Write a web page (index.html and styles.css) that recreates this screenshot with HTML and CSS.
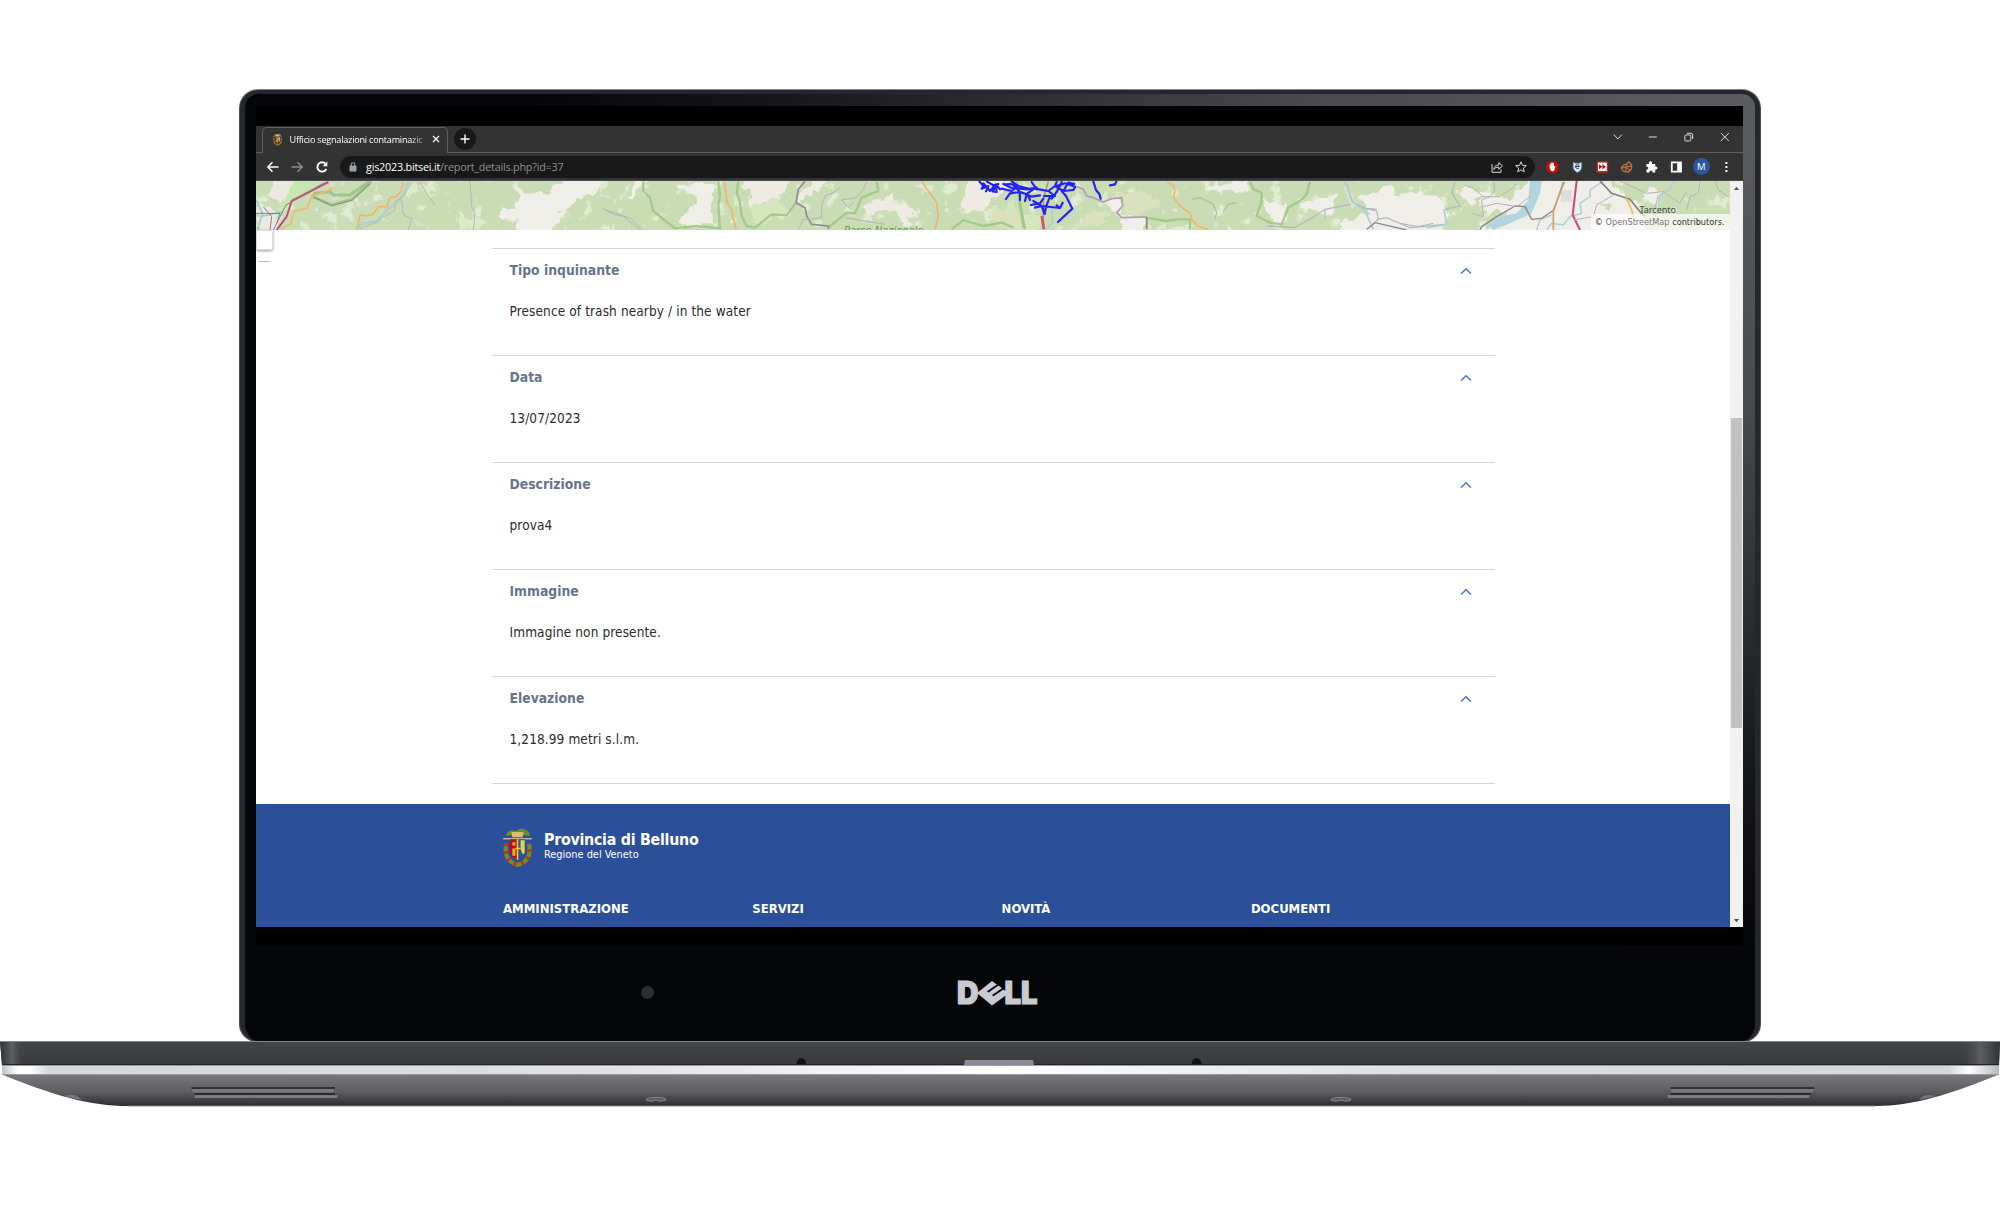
FILE: index.html
```html
<!DOCTYPE html>
<html lang="it">
<head>
<meta charset="utf-8">
<title>Ufficio segnalazioni contaminazione</title>
<link rel="stylesheet" href="styles.css">
</head>
<body>
<svg width="0" height="0" class="defs">
  <symbol id="crest" viewBox="0 0 28 38">
    <path d="M3 8Q4 0 13 3Q15 0 20 1Q26 3 26 8L21 7L14 8L7 7Z" fill="#6b8f2c"/>
    <path d="M8 4L20 4L19 9L9 9Z" fill="#d8bd6a"/>
    <path d="M3 15Q0 32 14 36Q29 32 25 15" fill="none" stroke="#728c26" stroke-width="4"/>
    <path d="M3 15Q0 32 14 36Q29 32 25 15" fill="none" stroke="#d3251f" stroke-width="4" stroke-dasharray="2.5 5"/>
    <path d="M0 10.500H28" stroke="#cfc39a" stroke-width="1.300"/>
    <path d="M6.500 11H14V31Q6.500 28 6.500 22Z" fill="#c00d18"/>
    <path d="M14 11H21.500V22Q21.500 28 14 31Z" fill="#2f5599"/>
    <path d="M9 14H12V17H9ZM9 20H12V27H9Z" fill="#d9b52b"/>
    <path d="M14 11V31M12 20H17" stroke="#f3d42c" stroke-width="1.500"/>
    <path d="M17 12H21V24Q19 28 17 20Z" fill="#d8d85c"/>
  </symbol>
</svg>
<main class="laptop">
  <div class="lid">
    <div class="glass">
      <div class="screen">
        <div class="browser">
          <div class="tabstrip">
            <div class="tab">
              <svg class="favicon"><use href="#crest"/></svg>
              <span class="tab-title">Ufficio segnalazioni contaminazic</span>
              <svg class="tab-close" viewBox="0 0 8 8"><path d="M1 1L7 7M7 1L1 7" stroke="#f1f1f1" stroke-width="1.400"/></svg>
            </div>
            <div class="new-tab"><svg width="10" height="10" viewBox="0 0 10 10"><path d="M5 .5V9.500M.5 5H9.500" stroke="#fff" stroke-width="1.400"/></svg></div>
            <div class="window-controls">
              <svg viewBox="0 0 12 12"><path d="M2 3.500L6 8L10 3.500"/></svg>
              <svg viewBox="0 0 12 12"><path d="M2 6H10"/></svg>
              <svg viewBox="0 0 12 12"><rect x="2" y="4" width="6" height="6" rx="1.300"/><path d="M4 2.300H8Q9.800 2.300 9.800 4V8"/></svg>
              <svg viewBox="0 0 12 12"><path d="M2 2L10 10M10 2L2 10"/></svg>
            </div>
          </div>
          <div class="toolbar">
            <div class="nav">
              <svg viewBox="0 0 14 14"><path d="M12.500 7H2M6.500 2.200L1.800 7L6.500 11.800" stroke="#fff"/></svg>
              <svg viewBox="0 0 14 14"><path d="M1.500 7H12M7.500 2.200L12.200 7L7.500 11.800" stroke="#8c8c8c"/></svg>
              <svg viewBox="0 0 14 14"><path d="M11.300 9A4.700 4.700 0 1 1 10.600 3.800" stroke="#fff" stroke-width="1.900"/><path d="M12.400 1.500V6.200H7.700Z" fill="#fff" stroke="none"/></svg>
            </div>
            <div class="omnibox">
              <svg class="lock" viewBox="0 0 8 10"><rect x=".5" y="3.500" width="7" height="6" rx=".8" fill="#9aa0a6"/><path d="M2.200 4V2.600A1.800 1.800 0 0 1 5.800 2.600V4" fill="none" stroke="#9aa0a6" stroke-width="1.100"/></svg>
              <span class="url"><b>gis2023.bitsei.it</b>/report_details.php?id=37</span>
              <svg class="pill-icon" viewBox="0 0 14 14"><path d="M2 4V12.300H11V9.500M3.700 9.500Q4.200 5 8.800 5V2.500L12.500 6L8.800 9.300V7Q5.500 7 3.700 9.500Z"/></svg>
              <svg class="pill-icon" viewBox="0 0 14 14"><path d="M7 1.800L8.500 5.300L12.300 5.600L9.400 8.100L10.300 11.800L7 9.800L3.700 11.800L4.600 8.100L1.700 5.600L5.500 5.300Z"/></svg>
            </div>
            <div class="extensions">
              <svg viewBox="0 0 14 14"><circle cx="7" cy="7" r="6.300" fill="#c90e0e"/><path d="M4.300 7.500V4.500H5.200V3.300H6.300V2.500H7.400V3.300H8.600V6L10 6.500L9 10.300Q7.500 12 5.500 10.800Z" fill="#fff"/></svg>
              <svg viewBox="0 0 14 14"><circle cx="7" cy="7" r="6" fill="#31475b"/><path d="M3 2L5 3.500H9L11 2V7Q11 10 7 12.500Q3 10 3 7Z" fill="#e8edf2"/><path d="M5 6.500H9Q9 4.700 7 4.700Q5 4.700 5 6.800Q5 9 8.700 8.300" fill="none" stroke="#31475b"/></svg>
              <svg viewBox="0 0 14 14"><rect x="1.200" y="1.200" width="11.600" height="11.600" rx="1.500" fill="#b92b24"/><rect x="2.600" y="2.600" width="8.800" height="8.300" fill="#fff"/><path d="M3.500 4L7 6.800L3.500 9.600ZM7 4L10.500 6.800L7 9.600Z" fill="#a81d1b"/></svg>
              <svg viewBox="0 0 14 14"><path d="M9 1.800A5.300 5.300 0 1 1 1.800 7.500L5 4.500L7.500 4.200ZM2 8L12 6M6 12L7.500 4M10.500 10L5 7" fill="none" stroke="#b9713d" stroke-width="1.300"/></svg>
              <svg viewBox="0 0 14 14"><path d="M2 4H4.500Q4.300 1.300 6.200 1.300Q8 1.300 7.800 4H10.800V6.500Q13 6.300 13 8Q13 9.800 10.800 9.600V12.500H8.200Q8.200 10.400 6.600 10.400Q5 10.400 5 12.500H2V9.600Q4 9.500 4 8Q4 6.800 2 6.700Z" fill="#fff"/></svg>
              <svg viewBox="0 0 14 14"><path d="M1.500 1.500H12.500V12.500H1.500ZM3.300 3.300V10.700H7.800V3.300Z" fill="#fff" fill-rule="evenodd"/></svg>
              <span class="avatar">M</span>
              <svg viewBox="0 0 14 14"><path d="M6 2H8V4H6ZM6 6H8V8H6ZM6 10H8V12H6Z" fill="#fff"/></svg>
            </div>
          </div>
          <div class="viewport">
            <div class="page">
              <div class="map">
                <svg class="map-canvas" viewBox="0 0 1474 49" fill="none" stroke-linejoin="round">
                  <defs>
                    <filter id="rough" x="-10%" y="-20%" width="120%" height="140%"><feTurbulence type="fractalNoise" baseFrequency=".09" numOctaves="3" seed="4"/><feDisplacementMap in="SourceGraphic" scale="13" xChannelSelector="R" yChannelSelector="G"/></filter>
                    <filter id="clearings" x="0" y="0" width="100%" height="100%"><feTurbulence type="fractalNoise" baseFrequency=".07" numOctaves="4" seed="9"/><feColorMatrix values="0 0 0 0 .87  0 0 0 0 .92  0 0 0 0 .8  9 0 0 0 -5.5"/></filter>
                  </defs>
                  <rect width="1474" height="49" fill="#c9dcb3"/>
                  <rect width="1474" height="49" filter="url(#clearings)" opacity=".6"/>
                  <g class="land" filter="url(#rough)">
                    <g transform="translate(-26,-101) scale(.33333)">
                      <path d="M145 295H210L190 335L155 370L130 350L112 345ZM78 385L120 375L150 398L140 465H78Z" fill="#ece9e2"/>
                      <path d="M205 295H290L185 365L165 400L130 420L150 370Z" fill="#c9e8b0"/>
                      <path d="M1000 295H1130L1085 345L1040 350L1020 385L985 405L968 465H870L865 420L850 430L805 400L812 380L855 385L870 350L850 325L900 340L920 350L960 330ZM1225 295H1255L1205 358L1185 357ZM1345 310L1380 325L1425 303L1455 335L1445 375L1450 425L1410 440H1365L1350 425L1390 380L1395 350L1340 325Z" fill="#f0eee9"/>
                      <path d="M530 303L570 325L545 345L515 340ZM690 400L770 430L735 450L690 440ZM575 320L620 345L600 355Z" fill="#dcebc5"/>
                    </g>
                    <g transform="translate(264,-5) scale(.33333)">
                      <path d="M680 8H815L780 60L745 80L720 65L710 95L680 90L690 50L660 25ZM845 50L890 8H920L880 50L830 82ZM1040 88L1110 55L1125 85L1180 95L1195 120L1160 115L1180 150H1150L1130 115L1095 105L1040 110L1025 95ZM1350 8H1480L1440 60L1395 95L1345 115L1320 100Z" fill="#efebe3"/>
                      <path d="M680 95L760 60L800 100L700 150ZM1450 90L1480 70L1500 110L1560 130V160H1440Z" fill="#d5e5bd"/>
                    </g>
                    <g transform="translate(684,-5) scale(.33333)">
                      <path d="M800 30L925 8V48L810 40ZM965 70L1045 90L1030 140L1000 145L980 100ZM1080 80L1190 55L1170 120L1085 100ZM1195 175L1210 130L1300 115L1250 60L1310 55L1345 20L1370 60L1430 55L1510 85L1525 125L1500 175ZM500 70L550 75L540 120L615 125V175H560L535 120Z" fill="#f0eee8"/>
                      <path d="M510 55L640 45L655 95L560 125L535 70ZM430 110L510 105L480 150L400 160ZM170 90L245 120L240 160L160 150Z" fill="#d8e0bc"/>
                    </g>
                    <g transform="translate(1144,-101) scale(.33333)">
                      <path d="M0 345L60 332L115 350L140 380L135 435L90 465H0ZM190 320L250 340L300 345L330 360L390 295H620L720 380L735 465H235L270 380L240 380L245 350L215 370L180 350ZM745 320L795 340L770 375L730 350Z" fill="#f0eee8"/>
                      <path d="M290 400L325 395L300 425L260 440L245 415ZM595 370L640 375L620 395Z" fill="#c9dcb3"/>
                    </g>
                  </g>
                  <g transform="translate(-26,-101) scale(.33333)">
                    <path d="M420 303L360 345L310 345L300 335L255 340L248 350L305 375L365 358L420 310" stroke="#9fc58a" stroke-width="9"/>
                    <path d="M248 350L305 377L368 360L425 305" stroke="#84917b" stroke-width="3"/>
                    <path d="M78 360L98 400L82 450M90 410L160 395" stroke="#9ccbd2" stroke-width="5"/>
                    <path d="M295 306L185 363L170 410L140 450" stroke="#c94a7d" stroke-width="6"/>
                    <path d="M280 310L168 375L130 450M78 400L150 400L140 430M100 380L125 410L120 450" stroke="#84828a" stroke-width="3"/>
                    <path d="M310 325L245 350L230 385L190 395L183 430L150 450" stroke="#efb877" stroke-width="5"/>
                    <path d="M535 306L510 360L470 390L440 425L395 430L382 450" stroke="#b5d2c9" stroke-width="9"/>
                    <path d="M520 306L513 335L497 350L480 353L470 380L445 380L430 402L410 408L390 405L380 450" stroke="#efb560" stroke-width="4.500"/>
                    <path d="M545 306L520 350L495 365V390L470 405L430 430L390 448M515 360L520 405L545 415L535 450M570 306L590 340L615 375M720 303L725 380L735 400L730 450M1125 390L1175 405L1230 450" stroke="#b8b6be" stroke-width="3"/>
                  </g>
                  <g transform="translate(264,-5) scale(.33333)">
                    <path d="M370 16V45L390 65L400 105L430 130L465 157L530 150L600 157L595 85L600 60L595 16M655 16L650 50L660 80L665 120L680 150L705 155L755 115L800 118L828 80M925 155L980 110L1005 112L1025 65L1075 45L1070 16M1295 160L1330 132L1390 150L1445 140L1480 155M1490 16L1510 155" stroke="#9cc684" stroke-width="7" opacity=".85"/>
                    <path d="M613 16L620 75L635 105L648 160M1205 16L1225 45L1250 80L1255 120L1245 160" stroke="#efb56e" stroke-width="5"/>
                    <path d="M1200 35L1240 85L1248 120L1240 160" stroke="#bcd3d5" stroke-width="3"/>
                    <path d="M855 16L835 40L828 80L855 95L860 120L875 145L925 150V160" stroke="#928b98" stroke-width="5"/>
                    <path d="M1040 16L1030 40L1010 65L965 72L985 95L1000 80M960 35L940 50L915 60L905 90V125L870 130L850 130L835 160M250 98L280 115L330 125L365 160M975 125L1095 145" stroke="#b8b2bc" stroke-width="3"/>
                  </g>
                  <g transform="translate(684,-5) scale(.33333)">
                    <path d="M240 80L255 160M620 125L680 135L710 130L750 130V160M930 16L940 40L965 50V75L950 120L990 140L1025 145L1045 95L1080 75L1100 55L1110 16" stroke="#9cc684" stroke-width="7" opacity=".85"/>
                    <path d="M410 32L430 40L440 60L460 65L490 78L515 68L545 65L548 90L530 110L545 125L620 123" stroke="#ad9cb4" stroke-width="5"/>
                    <path d="M620 123V160" stroke="#83877f" stroke-width="5"/>
                    <path d="M680 18L700 28L705 45L700 65L725 95L750 110L755 130L775 150L805 160" stroke="#f0b56e" stroke-width="5"/>
                    <path d="M755 70L780 65L820 85L830 110L825 130M890 80L865 85L850 105M1230 85L1155 100L1110 130L1060 155L980 150M1155 100V125M1215 16L1240 80L1280 98L1310 105L1315 130L1280 160M1260 95L1310 100M1310 130L1340 125L1410 155L1515 145M1545 16L1535 50L1560 90L1515 100" stroke="#b6b5ba" stroke-width="3.500"/>
                    <path d="M1218 20L1235 75L1275 105L1300 160M1460 155L1520 145L1512 100" stroke="#a9cfda" stroke-width="5"/>
                    <path d="M1280 160L1305 140L1400 162" stroke="#8d8d91" stroke-width="4"/>
                    <path d="M325 16L310 70V160" stroke="#bd9a76" stroke-width="5"/><path d="M305 120L312 160" stroke="#cf5270" stroke-width="8"/>
                    <path d="M335 95L338 140L320 158" stroke="#a8ced4" stroke-width="4"/>
                    <path d="M118 16L130 30L125 38L145 30L138 46M130 22L150 45L160 33L158 46L170 48L168 25L180 40M140 16L160 28L175 24M160 46L165 30L150 22M185 38L215 45L235 30L210 24L195 25M190 24L215 36L240 38L262 40L290 35M198 69L210 52L240 48L222 30M215 16L235 30L265 38M240 73V48L260 55L255 75M270 72L262 52L280 40M248 50L275 62L300 58M285 38L325 45L345 60L312 60M275 18L290 40M325 45L345 30L350 18M345 30L370 45L400 42L406 32L375 22L350 30M335 68L350 48L365 18M370 45L385 20L403 24M365 45L378 60L397 98L354 138M314 114L305 90L285 95M273 87L300 82L310 68M280 75L305 90L360 96L368 80M350 88L360 96M314 114L318 92L330 62M460 16L468 42L478 54L482 68M510 28L525 25L529 16" stroke="#2222f2" stroke-width="6.500" stroke-linecap="round"/>
                  </g>
                  <g transform="translate(1144,-101) scale(.33333)">
                    <path d="M482 330H515V365H482Z" fill="#dedddd"/>
                    <path d="M390 303H425L420 340L395 400L340 425L280 450L265 435L300 410L350 400L385 360Z" fill="#b2d4df"/>
                    <path d="M610 303L585 320L570 330L570 350L540 370L545 400L510 410L490 435L455 430L440 450M825 303L805 330L780 345L775 375" stroke="#aed3dd" stroke-width="5"/>
                    <path d="M490 306L462 390L425 415L395 418L375 380L345 378L290 410L245 440L240 450" stroke="#88888a" stroke-width="4"/>
                    <path d="M493 306L460 390V450" stroke="#c8a66e" stroke-width="5"/>
                    <path d="M530 303L518 405L540 450" stroke="#c7467b" stroke-width="6"/>
                    <path d="M600 303L635 340L690 358L720 395L735 410" stroke="#85817c" stroke-width="5"/>
                    <path d="M678 352L695 390L700 410" stroke="#efb964" stroke-width="5"/>
                    <path d="M280 303L285 330L270 350L245 360L250 410L215 400M195 315L220 325L250 350L300 350L355 310M250 380L290 370L340 378M350 380L390 350M410 450L420 420L455 405M640 345L590 375L580 410L520 420M0 430L55 440L100 430M660 303L740 340L790 335L840 370L860 335M775 345L765 385M900 303L895 340L870 350L860 390M945 303L955 330L985 350" stroke="#b4b3ba" stroke-width="3"/>
                  </g>
                  <text x="588" y="53" class="park">Parco Nazionale</text>
                  <text x="1383.500" y="32" class="town">Tarcento</text>
                </svg>
                <div class="attribution">© <span>OpenStreetMap</span> contributors.</div>
                <div class="map-popup"></div>
              </div>
              <div class="details">
                <section class="item"><h2>Tipo inquinante<svg viewBox="0 0 12 8"><path d="M1 6.500L6 1.700L11 6.500"/></svg></h2><p>Presence of trash nearby / in the water</p></section>
                <section class="item"><h2>Data<svg viewBox="0 0 12 8"><path d="M1 6.500L6 1.700L11 6.500"/></svg></h2><p>13/07/2023</p></section>
                <section class="item"><h2>Descrizione<svg viewBox="0 0 12 8"><path d="M1 6.500L6 1.700L11 6.500"/></svg></h2><p>prova4</p></section>
                <section class="item"><h2>Immagine<svg viewBox="0 0 12 8"><path d="M1 6.500L6 1.700L11 6.500"/></svg></h2><p>Immagine non presente.</p></section>
                <section class="item"><h2>Elevazione<svg viewBox="0 0 12 8"><path d="M1 6.500L6 1.700L11 6.500"/></svg></h2><p>1,218.99 metri s.l.m.</p></section>
              </div>
              <footer class="footer">
                <div class="brand">
                  <svg class="brand-crest"><use href="#crest"/></svg>
                  <div><div class="brand-name">Provincia di Belluno</div><div class="brand-sub">Regione del Veneto</div></div>
                </div>
                <div class="columns"><h3>AMMINISTRAZIONE</h3><h3>SERVIZI</h3><h3>NOVITÀ</h3><h3>DOCUMENTI</h3></div>
              </footer>
            </div>
            <div class="scrollbar">
              <svg width="7" height="4" viewBox="0 0 7 4"><path d="M1 4L3.500 .8L6 4Z" fill="#505050"/></svg>
              <div class="thumb"></div>
              <svg width="7" height="4" viewBox="0 0 7 4"><path d="M1 0L3.500 3.200L6 0Z" fill="#505050"/></svg>
            </div>
          </div>
        </div>
      </div>
      <div class="chin">
        <span class="camera"></span>
        <svg class="logo" viewBox="0 0 82 28">
          <text x="0" y="25" textLength="21.500" lengthAdjust="spacingAndGlyphs">D</text>
          <text x="47.500" y="25" textLength="33" lengthAdjust="spacingAndGlyphs">LL</text>
          <path d="M20 14L35 2L40 5.500L30 12.300L31.500 13.400L41.500 6.600L45 9.300L35 16.100L36.500 17.200L46.500 10.400L50 13V15.500L35 26.500Z" fill="#c9cad0"/>
        </svg>
      </div>
    </div>
  </div>
  <svg class="base" viewBox="0 1041 2000 68">
    <defs>
      <linearGradient id="deck" x2="0" y2="1"><stop offset="0" stop-color="#434448"/><stop offset="1" stop-color="#3a3b3f"/></linearGradient>
      <linearGradient id="side"><stop offset="0" stop-color="#303135"/><stop offset=".006" stop-color="#5d5e62"/><stop offset=".013" stop-color="#404145" stop-opacity="0"/><stop offset=".98" stop-color="#404145" stop-opacity="0"/><stop offset=".99" stop-color="#5c5d60"/><stop offset="1" stop-color="#333438"/></linearGradient>
      <linearGradient id="silver"><stop offset="0" stop-color="#bfc3c7"/><stop offset=".008" stop-color="#fff"/><stop offset=".014" stop-color="#fff"/><stop offset=".023" stop-color="#d3d8dc"/><stop offset=".3" stop-color="#e0e0e6"/><stop offset=".5" stop-color="#fff"/><stop offset=".7" stop-color="#dddfe3"/><stop offset=".975" stop-color="#d2d7dc"/><stop offset=".985" stop-color="#fff"/><stop offset="1" stop-color="#b6babe"/></linearGradient>
      <linearGradient id="belly" x2="0" y2="1"><stop offset="0" stop-color="#77787d"/><stop offset=".55" stop-color="#5e5d62"/><stop offset="1" stop-color="#2d2c31"/></linearGradient>
    </defs>
    <path d="M0 1042H2000L1999 1066H2Z" fill="url(#deck)"/>
    <path d="M0 1042H2000L1999 1066H2Z" fill="url(#side)"/>
    <path d="M0 1042.500H2000" stroke="#85868a"/>
    <path d="M2 1065.500H1999" stroke="#232428"/>
    <path d="M2 1075.500H1999C1950 1095 1915 1107 1875 1107H128C90 1107 55 1097 2 1075.500Z" fill="url(#belly)"/>
    <path d="M128 1107H1875" stroke="#858589"/>
    <rect x="2" y="1066" width="1997" height="10" fill="url(#silver)"/>
    <path d="M2 1066.500H1999M2 1075.500H1999" stroke="#9b9ca1"/>
    <path d="M796.500 1065V1064A4.700 4.700 0 0 1 806 1064V1065ZM1192 1065V1064A4.700 4.700 0 0 1 1201.500 1064V1065Z" fill="#111216"/>
    <path d="M964 1066L965 1061H1033L1034 1066Z" fill="#8c8b98"/>
    <path d="M192 1090H334.500L333 1093.500H193ZM194.500 1096H338L337 1099H195ZM1670.500 1090H1814L1812 1093.500H1672ZM1667 1096H1810L1809 1099H1668Z" fill="#7b7a80"/>
    <path d="M191.500 1089H335M194.500 1095H335M1670.500 1089H1814M1670.500 1095H1811" stroke="#1f1e24" stroke-width="1.500"/>
    <g fill="#5a595e" stroke="#8a898e"><path d="M646 1101Q646 1098.500 656 1098.500Q666 1098.500 666 1101Q660 1103.500 656 1101Q651 1103.500 646 1101Z"/><path d="M1331 1101Q1331 1098.500 1341 1098.500Q1351 1098.500 1351 1101Q1345 1103.500 1341 1101Q1336 1103.500 1331 1101Z"/></g>
    <path d="M64 1097Q75 1093 82 1101ZM1919 1101Q1924 1094 1936 1097Z" fill="#77767b"/>
  </svg>
</main>
</body>
</html>
```
FILE: styles.css
```css
* { box-sizing: border-box; }
body { margin: 0; background: #fff; font-family: "DejaVu Sans Condensed", "DejaVu Sans", sans-serif; font-stretch: condensed; }
h2, h3, p { margin: 0; }
.defs { position: absolute; }
.laptop { display: flex; flex-direction: column; align-items: center; height: 1211px; padding-top: 89px; overflow: hidden; }
.lid { width: 1522px; height: 953px; flex: none; padding: 1px; border-radius: 19px 19px 18px 18px; background: linear-gradient(#85888a, #4b4d51 2%, #494b4f); }
.glass { height: 100%; display: flex; flex-direction: column; padding: 12px 12px 0 10.5px; border: 5px solid #25272c; border-top-width: 4px; border-bottom-width: 0; border-radius: 18px; background: radial-gradient(ellipse 1230px 860px at 100% 0, #5c5d61 0, #4a4b4f 35%, #15161a 80%, #05060a 100%); box-shadow: inset 1px 0 0 #0b0c10; }
.screen { width: 1487px; height: 839px; flex: none; padding: 20px 0 18px; background: #000; }
.browser { height: 800.5px; display: flex; flex-direction: column; overflow: hidden; background: #333; }
.tabstrip { height: 27px; flex: none; display: flex; align-items: center; padding-left: 6px; border-bottom: 1px solid #5f5f5f; font-family: "Open Sans", "Noto Sans", sans-serif; font-stretch: normal; }
.tab { width: 186px; height: 26px; margin-top: 1px; display: flex; align-items: center; padding: 0 7px 2px 10px; border: 1px solid #5f5f5f; border-bottom: 0; border-radius: 5px 5px 0 0; background: #333; }
.favicon { width: 9px; height: 13px; flex: none; }
.tab-title { width: 139px; margin: 0 5px 0 8px; overflow: hidden; white-space: nowrap; font-size: 9.1px; letter-spacing: -.22px; color: #fff; -webkit-mask-image: linear-gradient(90deg, #000 87%, rgba(0,0,0,.2)); mask-image: linear-gradient(90deg, #000 87%, rgba(0,0,0,.2)); }
.tab-close { width: 8px; height: 8px; flex: none; }
.new-tab { width: 22px; height: 22px; margin-left: 6px; display: flex; align-items: center; justify-content: center; border-radius: 50%; background: #191919; }
.window-controls { margin-left: auto; display: flex; }
.window-controls svg { width: 35.7px; height: 12px; margin-bottom: 4px; fill: none; stroke: #dcdcdc; stroke-width: 1; }
.toolbar { height: 28px; flex: none; display: flex; align-items: center; border-bottom: 1px solid #4a4a4a; }
.nav { display: flex; gap: 10.500px; padding-left: 10px; width: 84px; }
.nav svg { width: 14px; height: 14px; flex: none; fill: none; stroke-width: 1.500; }
.omnibox { width: 1195px; height: 22px; display: flex; align-items: center; gap: 10px; padding: 0 7px 0 9.500px; border-radius: 11px; background: #191919; }
.lock { width: 8px; height: 10px; }
.url { flex: 1; margin-left: -1px; font-family: "Open Sans", "Noto Sans", sans-serif; font-stretch: normal; font-size: 10.8px; letter-spacing: -.22px; color: #8f8f8f; white-space: nowrap; }
.url b { font-weight: 400; color: #fff; }
.pill-icon { width: 14px; height: 14px; fill: none; stroke: #d6d6d6; }
.extensions { display: flex; align-items: center; padding-left: 5.500px; }
.extensions svg { width: 24.800px; height: 14px; }
.avatar { width: 17px; height: 17px; margin: 0 3.900px; border-radius: 50%; background: #2d56a0; color: #fff; text-align: center; font: 9.5px/17px "Open Sans", sans-serif; }
.viewport { flex: 1; min-height: 0; display: flex; }
.page { width: 1474px; display: flex; flex-direction: column; background: #fff; }
.map { position: relative; height: 49px; flex: none; }
.map-canvas { display: block; width: 1474px; height: 49px; }
.park { font: italic 11px "DejaVu Sans Condensed", "DejaVu Sans", sans-serif; fill: #5e9a4c; }
.town { font: 9px "Noto Sans", sans-serif; fill: #444; }
.attribution { position: absolute; right: 0; bottom: 0; width: 139px; height: 16px; padding-right: 5px; background: rgba(255,255,255,.7); font-size: 9.1px; line-height: 16px; text-align: right; white-space: nowrap; color: #333; }
.attribution span { color: #777; }
.map-popup { position: absolute; left: 0; top: 49px; width: 17px; height: 20px; border: 1px solid #ddd; border-radius: 2px; background: #fff; box-shadow: 0 1px 3px rgba(0,0,0,.4); }
.map-popup::after { content: ""; position: absolute; left: 2px; top: 29.500px; width: 11px; height: 1.500px; background: #bbb; }
.details { width: 1003px; margin: 18px 0 0 236px; border-bottom: 1px solid #d4d4d4; }
.item { height: 107.100px; padding: 13px 22.5px 0 18px; border-top: 1px solid #d4d4d4; }
.item h2 { height: 17px; display: flex; justify-content: space-between; align-items: center; font-size: 13.8px; line-height: 17px; color: #69748a; }
.item h2 svg { width: 12px; height: 8px; fill: none; stroke: #4a76d0; stroke-width: 1.500; }
.item p { margin-top: 24px; font-size: 13.500px; letter-spacing: .11px; line-height: 17px; color: #2b2b2b; }
.footer { margin-top: auto; height: 123px; flex: none; padding: 24px 0 0 247.500px; background: #2c4f99; color: #fff; }
.brand { height: 39px; display: flex; align-items: flex-start; gap: 12px; }
.brand-crest { width: 29px; height: 39px; }
.brand-name { margin-top: 3px; font-size: 15.8px; letter-spacing: -.25px; line-height: 18px; font-weight: 700; }
.brand-sub { font-size: 10.900px; line-height: 12px; }
.columns { display: grid; grid-template-columns: repeat(4, 249.300px); margin-top: 34.500px; }
.columns h3 { font-size: 13px; line-height: 16px; }
.scrollbar { width: 13px; display: flex; flex-direction: column; align-items: center; padding: 5px 0 4px; background: #f1f1f1; }
.thumb { width: 11px; height: 310px; margin: 228px 0 auto; background: #c1c1c1; }
.chin { flex: 1; position: relative; }
.camera { position: absolute; left: 385.500px; top: 41px; width: 13px; height: 13px; border-radius: 50%; background: #2d2e31; }
.logo { position: absolute; left: 701.500px; top: 34px; width: 82px; height: 28px; }
.logo text { font: 900 31px Inter, sans-serif; fill: #c9cad0; stroke: #c9cad0; stroke-width: 1.2px; }
.base { display: block; width: 2000px; height: 68px; flex: none; margin-top: -2px; }
```
